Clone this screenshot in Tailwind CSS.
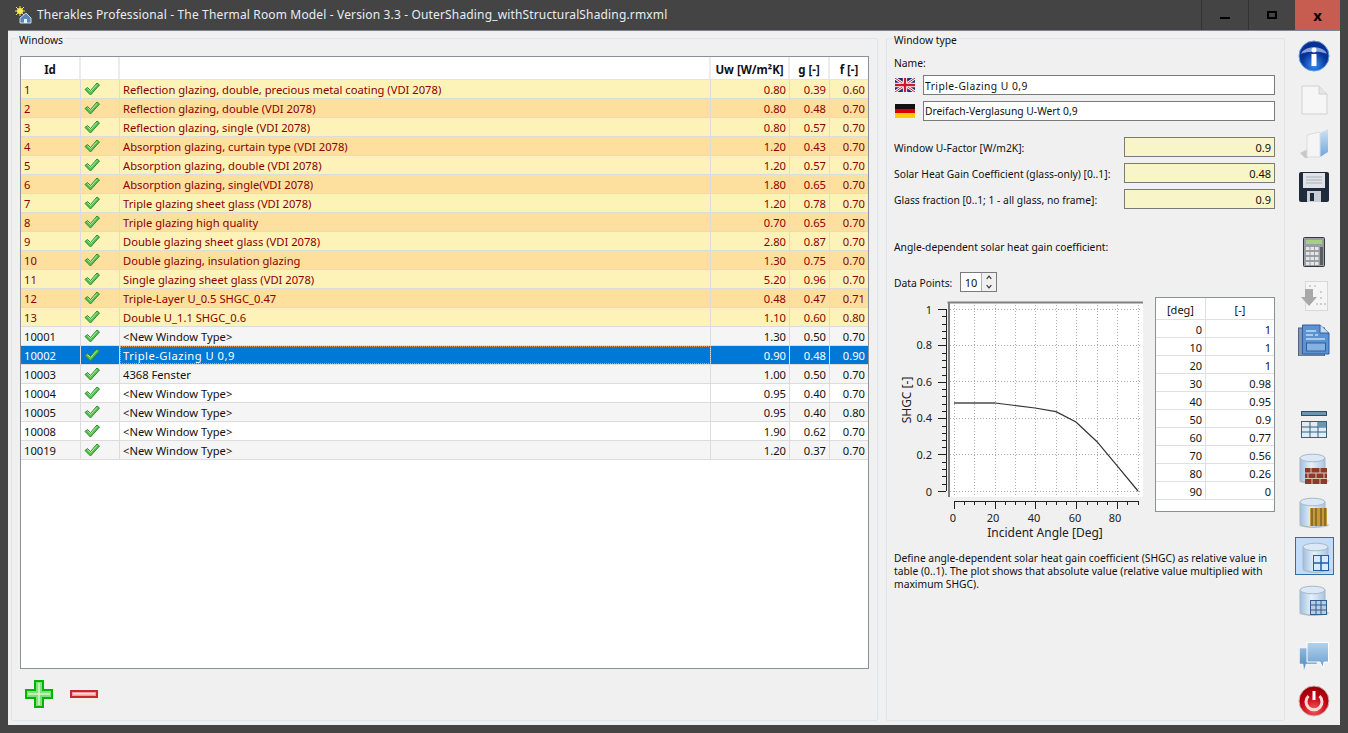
<!DOCTYPE html>
<html lang="en">
<head>
    <meta charset="UTF-8">
    <title>Therakles Professional</title>
    <script src="https://cdn.jsdelivr.net/npm/@tailwindcss/browser@4"></script>
</head>
<body class="w-[1348px] h-[733px] overflow-hidden bg-[#444444] font-['Noto_Sans',sans-serif] text-[11.2px] leading-[16px] text-[#111111]">
    <svg width="0" height="0" class="absolute">
        <defs>
            <linearGradient id="dbBody" x1="0" y1="0" x2="1" y2="0">
                <stop offset="0" stop-color="#9fc0e0"/><stop offset="0.45" stop-color="#e6f1fb"/><stop offset="1" stop-color="#a9c6e4"/>
            </linearGradient>
            <linearGradient id="bubble" x1="0" y1="0" x2="0" y2="1">
                <stop offset="0" stop-color="#b4d2ec"/><stop offset="1" stop-color="#6a9ecf"/>
            </linearGradient>
            <linearGradient id="bubbleBack" x1="0" y1="0" x2="0" y2="1">
                <stop offset="0" stop-color="#8fb8de"/><stop offset="1" stop-color="#4f86bd"/>
            </linearGradient>
            <linearGradient id="folderBlue" x1="0" y1="0" x2="0" y2="1">
                <stop offset="0" stop-color="#cfe2f4"/><stop offset="1" stop-color="#6fa6dc"/>
            </linearGradient>
            <radialGradient id="infoBall" cx="0.5" cy="0.8" r="0.8">
                <stop offset="0" stop-color="#3a8ff0"/><stop offset="0.55" stop-color="#06329a"/><stop offset="1" stop-color="#0a2f8f"/>
            </radialGradient>
            <radialGradient id="powerBall" cx="0.5" cy="0.8" r="0.8">
                <stop offset="0" stop-color="#f25a5a"/><stop offset="0.6" stop-color="#c00010"/><stop offset="1" stop-color="#8e0008"/>
            </radialGradient>
            <symbol id="db" viewBox="0 0 32 32">
                <ellipse cx="16" cy="28" rx="15" ry="3" fill="#c8c8c8"/>
                <path d="M2 5v21c0 2.500 6 4 13 4s12-1.500 12-4V5z" fill="url(#dbBody)" stroke="#a9b6c4"/>
                <ellipse cx="14.500" cy="5" rx="12.500" ry="3.800" fill="#dbe9f6" stroke="#a9b6c4"/>
            </symbol>
            <symbol id="check" viewBox="0 0 16 14">
                <path d="M1 7.500 3.500 5.500 6.500 8.500 13 1 15.500 3 6.500 13z" fill="#58c24a" stroke="#2f8a3a" stroke-width="1"/>
                <path d="M3.500 6.500 6.500 9.500 13 2.500" fill="none" stroke="#b4ecaa" stroke-width="1"/>
            </symbol>
        </defs>
    </svg>

    <!-- title bar -->
    <header class="h-[30px] flex items-center">
        <svg class="ml-[15px] mr-[5px] mt-[-1px]" width="17" height="18" viewBox="0 0 17 18">
            <path d="M1 1 9 9M9 1 1 9M5 0V10M0 5H10" stroke="#f4e04a"/>
            <circle cx="5" cy="5" r="3" fill="#f8ea5a"/>
            <path d="M5 17V12L11 7l5 5v5z" fill="#5a86b8" stroke="#c7d8ea"/>
            <rect x="9" y="13" width="3" height="4" fill="#e8f0f8"/>
        </svg>
        <span class="text-[12px] tracking-[0.15px] text-[#e6edf3]">Therakles Professional - The Thermal Room Model - Version 3.3 - OuterShading_withStructuralShading.rmxml</span>
        <div class="ml-auto mr-[8px] flex h-[30px]">
            <button class="w-[47px] border-l border-[#333333] flex items-center justify-center"><span class="w-[10px] h-[2px] mt-[5px] bg-black"></span></button>
            <button class="w-[47px] border-l border-[#333333] flex items-center justify-center"><span class="w-[10px] h-[8px] border-2 border-black"></span></button>
            <button class="w-[45px] bg-[#c75c50] flex items-center justify-center text-black font-bold text-[15px]">x</button>
        </div>
    </header>

    <main class="ml-[8px] w-[1332px] h-[695px] bg-[#f0f0f0] flex pl-[3px] pt-[7px] border-t border-[#7b8694]">
        <!-- windows group -->
        <section class="relative w-[867px] h-[683px] border border-[#dbe5ee] rounded-[2px] pl-[8px] pt-[17px]">
            <span class="absolute left-[5px] top-[-6px] bg-[#f0f0f0] px-[2px] text-[10.3px] leading-[14px]">Windows</span>
            <div class="h-[613px] w-[849px] border border-[#8b909a] bg-white">
                <div class="flex h-[23px] border-b border-[#e4e4e4] font-bold text-[11.5px] text-center leading-[25px]">
                    <div class="w-[60px] border-r-2 border-[#ececec]">Id</div>
                    <div class="w-[39px] border-r-2 border-[#ececec]"></div>
                    <div class="w-[591px] border-r-2 border-[#ececec]"></div>
                    <div class="w-[79px] border-r-2 border-[#ececec]">Uw [W/m²K]</div>
                    <div class="w-[40px] border-r-2 border-[#ececec]">g [-]</div>
                    <div class="w-[38px]">f [-]</div>
                </div>
                <div id="rows"></div>
            </div>
            <div class="flex items-center gap-[17px] ml-[5px] mt-[11px]">
                <svg width="28" height="28" viewBox="0 0 28 28">
                    <path d="M10 1h8v9h9v8h-9v9h-8v-9H1v-8h9z" fill="#7fe07a" stroke="#00b400" stroke-width="2"/>
                    <path d="M14 3v22M3 14h22" stroke="#d5f7d0" stroke-width="1.500"/>
                </svg>
                <svg width="28" height="8" viewBox="0 0 28 8">
                    <rect x="1" y="1" width="26" height="6" fill="#f39a9a" stroke="#c8282c" stroke-width="2"/>
                    <rect x="3" y="3" width="22" height="1.500" fill="#ffe0e0"/>
                </svg>
            </div>
        </section>

        <!-- window type group -->
        <section class="relative ml-[8px] w-[399px] h-[683px] border border-[#dbe5ee] rounded-[2px] px-[7px] pt-[17px] text-[10.3px] leading-[14px]">
            <span class="absolute left-[5px] top-[-6px] bg-[#f0f0f0] px-[2px]">Window type</span>
            <div>Name:</div>
            <div class="flex items-center gap-[8px] mt-[5px]">
                <svg width="20" height="14" viewBox="0 0 60 42" class="ml-[1px]">
                    <rect width="60" height="42" fill="#1f2f7a"/>
                    <path d="M0 0 60 42M60 0 0 42" stroke="#fff" stroke-width="8"/>
                    <path d="M0 0 60 42M60 0 0 42" stroke="#cc1a2a" stroke-width="3"/>
                    <path d="M30 0V42M0 21H60" stroke="#fff" stroke-width="13"/>
                    <path d="M30 0V42M0 21H60" stroke="#cc1a2a" stroke-width="7"/>
                </svg>
                <div class="w-[352px] h-[20px] border border-[#7a7a7a] bg-white px-[1px] leading-[20px] tracking-[0.45px]">Triple-Glazing U 0,9</div>
            </div>
            <div class="flex items-center gap-[8px] mt-[6px]">
                <div class="ml-[1px] w-[20px] h-[14px] bg-[linear-gradient(#111111_33%,#dd0000_33%,#dd0000_66%,#ffcc00_66%)]"></div>
                <div class="w-[352px] h-[20px] border border-[#7a7a7a] bg-white px-[1px] leading-[18px]">Dreifach-Verglasung U-Wert 0,9</div>
            </div>

            <div class="flex items-center justify-between mt-[16px] w-[381px] h-[20px]">
                <span class="whitespace-nowrap pt-[2px]">Window U-Factor [W/m2K]:</span>
                <div class="w-[151px] h-[20px] border border-[#7a7a7a] bg-[#f8f6c8] text-right px-[3px] leading-[20px] text-[11px]">0.9</div>
            </div>
            <div class="flex items-center justify-between mt-[6px] w-[381px] h-[20px]">
                <span class="whitespace-nowrap pt-[2px]">Solar Heat Gain Coefficient (glass-only) [0..1]:</span>
                <div class="w-[151px] h-[20px] border border-[#7a7a7a] bg-[#f8f6c8] text-right px-[3px] leading-[20px] text-[11px]">0.48</div>
            </div>
            <div class="flex items-center justify-between mt-[6px] w-[381px] h-[20px]">
                <span class="whitespace-nowrap pt-[2px]">Glass fraction [0..1; 1 - all glass, no frame]:</span>
                <div class="w-[151px] h-[20px] border border-[#7a7a7a] bg-[#f8f6c8] text-right px-[3px] leading-[20px] text-[11px]">0.9</div>
            </div>

            <div class="mt-[31px]">Angle-dependent solar heat gain coefficient:</div>

            <div class="flex items-center mt-[18px] h-[20px]">
                <span class="w-[66px] pt-[2px]">Data Points:</span>
                <div class="w-[37px] h-[20px] border border-[#7a7a7a] bg-white flex text-[11px]">
                    <span class="w-[20px] text-center leading-[20px]">10</span>
                    <div class="flex-1 flex flex-col bg-[#f0f0f0] border-l border-[#b0b0b0] text-[#333333]">
                        <svg class="h-[9px] w-full" viewBox="0 0 15 9"><path d="M5 6l2.500-3L10 6" fill="none" stroke="#333" stroke-width="1.200"/></svg>
                        <svg class="h-[9px] w-full" viewBox="0 0 15 9"><path d="M5 3l2.500 3L10 3" fill="none" stroke="#333" stroke-width="1.200"/></svg>
                    </div>
                </div>
            </div>

            <div class="flex items-start mt-[5px]">
                <svg width="261" height="245" viewBox="894 298 261 245" class="shrink-0">
                    <rect x="949" y="304" width="194" height="194" fill="#fff"/>
                    <path d="M949 304V498M947.500 303.500H1143" stroke="#808080" stroke-width="2" fill="none"/>
                    <g stroke="#aaaaaa" stroke-dasharray="1 2" stroke-width="1">
                        <path d="M950 310.500H1140M950 346.500H1140M950 382.500H1140M950 419.500H1140M950 455.500H1140M950 492.500H1140"/>
                        <path d="M954.500 306V496M974.500 306V496M995.500 306V496M1015.500 306V496M1035.500 306V496M1056.500 306V496M1076.500 306V496M1097.500 306V496M1117.500 306V496M1138.500 306V496"/>
                    </g>
                    <polyline points="954,404 995,404" fill="none" stroke="#777" stroke-width="2"/>
                    <polyline points="995,404 1015,406.500 1035,409 1056,412.700 1076,423 1097,442.700 1117,466.700 1138,492" fill="none" stroke="#333" stroke-width="1.200"/>
                    <!-- y axis -->
                    <path d="M946.500 310V492M938 310.500H946M938 346.500H946M938 383.500H946M938 419.500H946M938 455.500H946M938 492.500H946" stroke="#222" fill="none"/>
                    <path d="M942 317.500H946M942 325.500H946M942 332.500H946M942 339.500H946M942 354.500H946M942 361.500H946M942 368.500H946M942 376.500H946M942 390.500H946M942 397.500H946M942 405.500H946M942 412.500H946M942 427.500H946M942 434.500H946M942 441.500H946M942 448.500H946M942 463.500H946M942 470.500H946M942 477.500H946M942 485.500H946" stroke="#222" fill="none"/>
                    <!-- x axis -->
                    <path d="M954 502.500H1138M954.500 502V510M995.500 502V510M1035.500 502V510M1076.500 502V510M1117.500 502V510" stroke="#222" fill="none"/>
                    <path d="M964.500 502V506M974.500 502V506M985.500 502V506M1005.500 502V506M1015.500 502V506M1025.500 502V506M1046.500 502V506M1056.500 502V506M1066.500 502V506M1087.500 502V506M1097.500 502V506M1107.500 502V506M1127.500 502V506M1138.500 502V506" stroke="#222" fill="none"/>
                    <g font-size="11" fill="#222" text-anchor="end">
                        <text x="932" y="315">1</text><text x="932" y="350">0.8</text><text x="932" y="387">0.6</text><text x="932" y="423">0.4</text><text x="932" y="460">0.2</text><text x="932" y="497">0</text>
                    </g>
                    <g font-size="11" fill="#222" text-anchor="middle">
                        <text x="953" y="523">0</text><text x="993" y="523">20</text><text x="1034" y="523">40</text><text x="1075" y="523">60</text><text x="1115" y="523">80</text>
                    </g>
                    <text x="1045" y="538" font-size="12" fill="#222" text-anchor="middle">Incident Angle [Deg]</text>
                    <text transform="translate(911 401) rotate(-90)" font-size="12" fill="#222" text-anchor="middle">SHGC [-]</text>
                </svg>
                <div class="w-[120px] h-[215px] border border-[#8b909a] bg-white text-[11px]">
                    <div class="flex h-[22px] border-b border-[#e0e0e0] text-center leading-[24px]">
                        <div class="w-[50px] border-r border-[#e0e0e0]">[deg]</div>
                        <div class="flex-1">[-]</div>
                    </div>
                    <div id="angleRows"></div>
                </div>
            </div>
            <p class="w-[381px] mt-[10px] leading-[13px]">Define angle-dependent solar heat gain coefficient (SHGC) as relative value in table (0..1). The plot shows that absolute value (relative value multiplied with maximum SHGC).</p>
        </section>

        <!-- tool bar -->
        <nav class="w-[40px] ml-[9px] mt-[-7px] flex flex-col items-center">
            <svg class="mt-[9px]" width="32" height="32" viewBox="0 0 32 32">
                <circle cx="16" cy="16" r="15" fill="url(#infoBall)" stroke="#5b9be0"/>
                <path d="M3 14C6 5 26 5 29 14 24 11 8 11 3 14z" fill="#b9d0f2" opacity="0.7"/>
                <circle cx="16" cy="10" r="2.500" fill="#fff"/><rect x="13.500" y="14" width="5" height="12" fill="#fff"/>
            </svg>
            <svg class="mt-[13px]" width="28" height="30" viewBox="0 0 28 30">
                <path d="M2 1h17l8 8v20H2z" fill="#f6f6f6" stroke="#d0d0d0"/>
                <path d="M19 1v8h8" fill="#e6e6e6" stroke="#d0d0d0"/>
            </svg>
            <svg class="mt-[13px]" width="30" height="30" viewBox="0 0 30 30">
                <path d="M1 25 9 21V30H6z" fill="#c8c8c8"/>
                <path d="M21 5 29 1V24L21 29z" fill="url(#folderBlue)"/>
                <path d="M8 7 21 4V29L8 29z" fill="#f5f5f5" stroke="#dcdcdc"/>
            </svg>
            <svg class="mt-[14px]" width="30" height="30" viewBox="0 0 30 30">
                <path d="M2 0h26a2 2 0 0 1 2 2v26a2 2 0 0 1-2 2H2a2 2 0 0 1-2-2V2a2 2 0 0 1 2-2z" fill="#1f2a3c"/>
                <rect x="4" y="1" width="22" height="15" fill="#dfe3e8"/>
                <path d="M7 5H23M7 8H23M7 11H23" stroke="#a9b0ba"/>
                <rect x="8" y="19" width="14" height="11" fill="#c9ced4"/><rect x="11" y="21" width="4" height="8" fill="#1f2a3c"/>
            </svg>
            <svg class="mt-[35px]" width="22" height="30" viewBox="0 0 22 30">
                <rect x="0.500" y="0.500" width="21" height="29" rx="1" fill="#9a9ea2" stroke="#33383d"/>
                <rect x="3" y="3" width="16" height="4" fill="#a6cf84"/>
                <g fill="#e4e6e8"><rect x="3" y="10" width="3.500" height="3"/><rect x="7.500" y="10" width="3.500" height="3"/><rect x="12" y="10" width="3.500" height="3"/><rect x="3" y="15" width="3.500" height="3"/><rect x="7.500" y="15" width="3.500" height="3"/><rect x="12" y="15" width="3.500" height="3"/><rect x="3" y="20" width="3.500" height="3"/><rect x="7.500" y="20" width="3.500" height="3"/><rect x="12" y="20" width="3.500" height="3"/><rect x="3" y="25" width="3.500" height="3"/><rect x="7.500" y="25" width="3.500" height="3"/><rect x="12" y="25" width="3.500" height="3"/></g>
                <rect x="17" y="10" width="3" height="18" fill="#5a5e62"/>
            </svg>
            <svg class="mt-[14px]" width="28" height="30" viewBox="0 0 28 30">
                <rect x="5.500" y="0.500" width="22" height="29" fill="#f5f5f5" stroke="#d8d8d8"/>
                <g fill="#cfcfcf"><rect x="9" y="4" width="2" height="2"/><rect x="14" y="4" width="2" height="2"/><rect x="20" y="10" width="2" height="2"/><rect x="20" y="16" width="2" height="2"/><rect x="16" y="22" width="2" height="2"/><rect x="20" y="22" width="2" height="2"/><rect x="24" y="22" width="2" height="2"/></g>
                <path d="M5 8h8v8h4l-8 9-8-9h4z" fill="#a9a9a9"/>
            </svg>
            <svg class="mt-[13px]" width="32" height="32" viewBox="0 0 32 32">
                <rect x="0.500" y="4" width="26" height="28" fill="#7f96ad" stroke="#4f667d"/>
                <path d="M4.500 1H22l9 8v21H4.500z" fill="#5b92d2" stroke="#2f5f9f"/>
                <path d="M22 1v8h9" fill="#c6dcf2" stroke="#2f5f9f"/>
                <path d="M8 7H18M8 11H15M17 11H20M8 15H27" stroke="#fff" stroke-width="1.200"/>
                <rect x="8.500" y="19" width="19" height="8" fill="#86b2e2" stroke="#2f5f9f"/>
            </svg>
            <svg class="mt-[55px]" width="26" height="27" viewBox="0 0 26 27">
                <rect x="0.500" y="0.500" width="25" height="4" fill="#6a96b4" stroke="#2f4f66"/>
                <rect x="0.500" y="10.500" width="25" height="16" fill="#dfeef6" stroke="#3a5f78"/>
                <path d="M1 16H25M1 21H25M9 11V26M17 11V26" stroke="#3a5f78"/>
                <rect x="17" y="11" width="8" height="5" fill="#6a96b4"/>
            </svg>
            <div class="relative w-[32px] h-[32px] mt-[15px]">
                <svg width="32" height="32" class="absolute left-0 top-0"><use href="#db"/></svg>
                <svg class="absolute left-[7px] top-[15px]" width="22" height="16" viewBox="0 0 22 16">
                    <rect width="22" height="16" fill="#8b3a2b"/>
                    <path d="M0 5H22M0 10.500H22M6 0V5M15 0V5M3 5V10.500M11 5V10.500M19 5V10.500M7 10.500V16M15 10.500V16" stroke="#d8c8b8"/>
                </svg>
            </div>
            <div class="relative w-[32px] h-[32px] mt-[12px]">
                <svg width="32" height="32" class="absolute left-0 top-0"><use href="#db"/></svg>
                <svg class="absolute left-[12px] top-[11px]" width="17" height="18" viewBox="0 0 17 18">
                    <rect width="17" height="18" fill="#c49a3a"/>
                    <path d="M2 0V18M6 0V18M11 0V18M15 0V18" stroke="#6d5418" stroke-width="1.200"/>
                </svg>
            </div>
            <div class="relative w-[39px] h-[38px] mt-[8px] bg-[#c2dcfa] border border-[#2f6ea8]">
                <svg width="32" height="32" class="absolute left-[5px] top-[4px]"><use href="#db"/></svg>
                <svg class="absolute left-[17px] top-[17px]" width="16" height="16" viewBox="0 0 16 16">
                    <rect x="0.500" y="0.500" width="15" height="15" fill="#dbeafa" stroke="#1f5fa8"/>
                    <path d="M8 0V16M0 8H16" stroke="#1f5fa8" stroke-width="1.500"/>
                </svg>
            </div>
            <div class="relative w-[32px] h-[32px] mt-[10px]">
                <svg width="32" height="32" class="absolute left-0 top-0"><use href="#db"/></svg>
                <svg class="absolute left-[12px] top-[15px]" width="17" height="15" viewBox="0 0 17 15">
                    <rect x="0.500" y="0.500" width="16" height="14" fill="#b5cde6" stroke="#355d8a"/>
                    <path d="M0 5H17M0 10H17M6 0V15M11 0V15" stroke="#355d8a"/>
                </svg>
            </div>
            <svg class="mt-[25px]" width="30" height="30" viewBox="0 0 30 30">
                <path d="M0.500 6H18V22H7L5 29 4 22H0.500z" fill="url(#bubbleBack)" stroke="#fff" stroke-width="0.500"/>
                <path d="M8 0.500H29.500V20H25L24 26 21 20H8z" fill="url(#bubble)" stroke="#fff"/>
            </svg>
            <svg class="mt-[13px]" width="32" height="32" viewBox="0 0 32 32">
                <circle cx="16" cy="16" r="15" fill="url(#powerBall)" stroke="#d8b0b0"/>
                <path d="M10.500 11A8 8 0 1 0 21.500 11" fill="none" stroke="#ffd8d8" stroke-width="3"/>
                <path d="M16 6V15" stroke="#fff" stroke-width="3"/>
            </svg>
        </nav>
    </main>

    <script>
        const windowTypes = [
            ['1', 'Reflection glazing, double, precious metal coating (VDI 2078)', '0.80', '0.39', '0.60'],
            ['2', 'Reflection glazing, double (VDI 2078)', '0.80', '0.48', '0.70'],
            ['3', 'Reflection glazing, single (VDI 2078)', '0.80', '0.57', '0.70'],
            ['4', 'Absorption glazing, curtain type (VDI 2078)', '1.20', '0.43', '0.70'],
            ['5', 'Absorption glazing, double (VDI 2078)', '1.20', '0.57', '0.70'],
            ['6', 'Absorption glazing, single(VDI 2078)', '1.80', '0.65', '0.70'],
            ['7', 'Triple glazing sheet glass (VDI 2078)', '1.20', '0.78', '0.70'],
            ['8', 'Triple glazing high quality', '0.70', '0.65', '0.70'],
            ['9', 'Double glazing sheet glass (VDI 2078)', '2.80', '0.87', '0.70'],
            ['10', 'Double glazing, insulation glazing', '1.30', '0.75', '0.70'],
            ['11', 'Single glazing sheet glass (VDI 2078)', '5.20', '0.96', '0.70'],
            ['12', 'Triple-Layer U_0.5 SHGC_0.47', '0.48', '0.47', '0.71'],
            ['13', 'Double U_1.1 SHGC_0.6', '1.10', '0.60', '0.80'],
            ['10001', '<New Window Type>', '1.30', '0.50', '0.70'],
            ['10002', 'Triple-Glazing U 0,9', '0.90', '0.48', '0.90'],
            ['10003', '4368 Fenster', '1.00', '0.50', '0.70'],
            ['10004', '<New Window Type>', '0.95', '0.40', '0.70'],
            ['10005', '<New Window Type>', '0.95', '0.40', '0.80'],
            ['10008', '<New Window Type>', '1.90', '0.62', '0.70'],
            ['10019', '<New Window Type>', '1.20', '0.37', '0.70']
        ];

        function rowStyle(i) {
            if (i < 13) return i % 2 ? 'bg-[#fddf9e] text-[#8b0000]' : 'bg-[#fdf2b8] text-[#8b0000]';
            if (i === 14) return 'bg-[#0078d7] text-white';
            return i % 2 ? 'bg-[#f5f5f5] text-[#111111]' : 'bg-white text-[#111111]';
        }

        const rows = document.getElementById('rows');
        windowTypes.forEach((w, i) => {
            const row = document.createElement('div');
            row.className = 'flex h-[19px] leading-[19px] border-b border-[#dcdcdc] ' + rowStyle(i);
            const cell = (cls, text) => {
                const c = document.createElement('div');
                c.className = cls;
                c.textContent = text;
                row.appendChild(c);
                return c;
            };
            cell('w-[60px] px-[3px] border-r border-[#dcdcdc]', w[0]);
            const icon = cell('w-[39px] border-r border-[#dcdcdc] pl-[3px] pt-[2px]', '');
            icon.innerHTML = '<svg width="16" height="14"><use href="#check"/></svg>';
            cell(i === 14
                ? 'w-[591px] px-[3px] border-r border-[#dcdcdc] tracking-[0.5px] outline-1 outline-dotted outline-[#e0a060] -outline-offset-1'
                : 'w-[591px] px-[3px] border-r border-[#dcdcdc]', w[1]);
            cell('w-[79px] px-[3px] text-right border-r border-[#dcdcdc]', w[2]);
            cell('w-[40px] px-[3px] text-right border-r border-[#dcdcdc]', w[3]);
            cell('w-[38px] px-[3px] text-right', w[4]);
            rows.appendChild(row);
        });

        const angles = [[0, 1], [10, 1], [20, 1], [30, 0.98], [40, 0.95], [50, 0.9], [60, 0.77], [70, 0.56], [80, 0.26], [90, 0]];
        const angleRows = document.getElementById('angleRows');
        angles.forEach(a => {
            const row = document.createElement('div');
            row.className = 'flex h-[18px] leading-[19px] border-b border-[#e0e0e0] text-right';
            row.innerHTML = '<div class="w-[50px] px-[3px] border-r border-[#e0e0e0]">' + a[0] + '</div><div class="flex-1 px-[3px]">' + a[1] + '</div>';
            angleRows.appendChild(row);
        });
    </script>
</body>
</html>
